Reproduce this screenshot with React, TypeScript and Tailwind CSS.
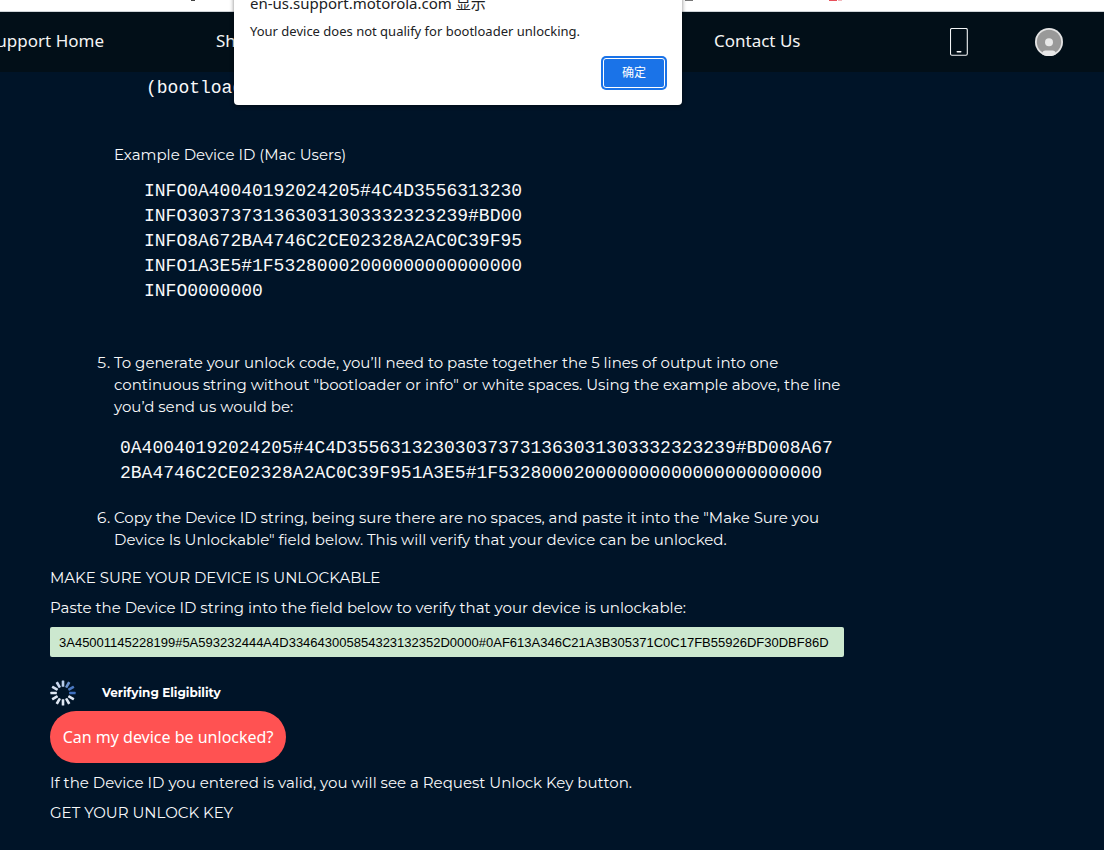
import React from 'react';

const INFO_LINES = [
  'INFO0A40040192024205#4C4D3556313230',
  'INFO30373731363031303332323239#BD00',
  'INFO8A672BA4746C2CE02328A2AC0C39F95',
  'INFO1A3E5#1F53280002000000000000000',
  'INFO0000000',
];

const DEVICE_ID =
  '3A45001145228199#5A593232444A4D334643005854323132352D0000#0AF613A346C21A3B305371C0C17FB55926DF30DBF86D';

const SPOKES = [
  '#b9cdea', '#6c93cf', '#4a78c0', '#3f6fbe', '#dfe7f3', '#dfe7f3',
  '#dfe7f3', '#dfe7f3', '#dfe7f3', '#dfe7f3', '#d3deef', '#c8d6ee',
];

function Spinner() {
  return (
    <svg className="h-[26px] w-[26px] shrink-0" viewBox="0 0 26 26" aria-hidden="true">
      {SPOKES.map((color, i) => (
        <rect key={i} x="11.7" y="0.4" width="2.6" height="6.4" rx="0.5" fill={color} transform={`rotate(${i * 30} 13 13)`} />
      ))}
    </svg>
  );
}

function PhoneIcon() {
  return (
    <svg className="h-7 w-[18px]" viewBox="0 0 18 28" fill="none" aria-hidden="true">
      <rect x="0.5" y="0.5" width="16.8" height="26.7" rx="1.4" stroke="#f3f5f6" strokeWidth="1.1" />
      <rect x="6.5" y="22.9" width="5" height="1.6" rx="0.8" fill="#ffffff" />
    </svg>
  );
}

function AvatarIcon() {
  return (
    <svg className="h-7 w-7" viewBox="0 0 28 28" aria-hidden="true">
      <circle cx="14" cy="14" r="14" fill="#e4e4e4" />
      <circle cx="14" cy="14" r="12.2" fill="#999999" />
      <circle cx="14" cy="14.3" r="4" fill="#e8e8e8" />
      <path d="M7 26.2C7.4 23.6 8.6 22.5 10.6 22.5H17.4C19.4 22.5 20.6 23.6 21 26.2A14 14 0 0 1 7 26.2Z" fill="#e8e8e8" />
    </svg>
  );
}

function BootDialog() {
  return (
    <div
      role="dialog"
      aria-labelledby="dialog-title"
      className="absolute -top-[17px] left-[234px] z-10 flex w-[448px] flex-col rounded-b bg-white px-4 pt-2 pb-[17px] font-['Noto_Sans','Noto_Sans_CJK_SC',sans-serif] text-[#202124] shadow-[0_1px_4px_rgba(0,0,0,0.5)]"
    >
      <h2 id="dialog-title" className="text-[15px] leading-6 whitespace-nowrap">
        en-us.support.motorola.com 显示
      </h2>
      <p className="mt-1 text-[13px] leading-6 whitespace-nowrap">Your device does not qualify for bootloader unlocking.</p>
      <button
        type="button"
        className="mt-[15px] mr-px h-[30px] w-[62px] self-end rounded-[3px] border border-white bg-[#1a73e8] text-[12px] text-white ring-2 ring-[#1a73e8]"
      >
        确定
      </button>
    </div>
  );
}

function Mono({ children }: { children: React.ReactNode }) {
  return <div className="font-['Liberation_Mono',monospace] text-[18px] leading-[25px] whitespace-nowrap">{children}</div>;
}

export default function App() {
  return (
    <div className="relative min-h-screen overflow-hidden bg-[#001428] font-['Montserrat','Inter',sans-serif] text-[15px] leading-[22px] text-[#f8f9fa]">
      <div className="flex h-3 items-start border-b border-[#cfd4d8] bg-white pl-[191px]">
        <span className="h-px w-1 bg-[#444444]" />
        <span className="ml-[490px] h-px w-2 bg-[#777777]" />
        <span className="ml-[136px] h-px w-2 bg-[#e8505b]" />
        <span className="ml-px h-px w-1 bg-[#f2b8bd]" />
      </div>

      <header className="flex h-[60px] items-center bg-[#020f18] font-['Noto_Sans',sans-serif] text-[17px] text-[#f4f4f4]">
        <nav className="flex pb-0.5 whitespace-nowrap">
          <a href="#home" className="flex w-[216px] justify-start">
            <span className="flex w-[104px] justify-end">Support Home</span>
          </a>
          <a href="#shop" className="w-[498px]">Shop</a>
          <a href="#contact">Contact Us</a>
        </nav>
        <div className="ml-auto flex items-center gap-[67px] pr-[41px]">
          <button type="button" aria-label="My device"><PhoneIcon /></button>
          <button type="button" aria-label="Account"><AvatarIcon /></button>
        </div>
      </header>

      <BootDialog />

      <main className="max-w-[844px] pt-1 pb-6 pl-[50px]">
        <div className="pl-24"><Mono>(bootloader)</Mono></div>
        <p className="mt-[43px] pl-16">Example Device ID (Mac Users)</p>
        <div className="mt-[13px] pl-[94px]">
          {INFO_LINES.map((line) => <Mono key={line}>{line}</Mono>)}
        </div>

        <ol start={5} className="mt-12 list-decimal pl-16 whitespace-nowrap">
          <li>
            To generate your unlock code, you’ll need to paste together the 5 lines of output into one<br />
            continuous string without "bootloader or info" or white spaces. Using the example above, the line<br />
            you’d send us would be:
            <div className="mt-[18px] pl-[6px]">
              <Mono>0A40040192024205#4C4D355631323030373731363031303332323239#BD008A67</Mono>
              <Mono>2BA4746C2CE02328A2AC0C39F951A3E5#1F532800020000000000000000000000</Mono>
            </div>
          </li>
          <li className="mt-[21px]">
            Copy the Device ID string, being sure there are no spaces, and paste it into the "Make Sure you<br />
            Device Is Unlockable" field below. This will verify that your device can be unlocked.
          </li>
        </ol>

        <h2 className="mt-4">MAKE SURE YOUR DEVICE IS UNLOCKABLE</h2>
        <label htmlFor="device-id" className="mt-2 block">
          Paste the Device ID string into the field below to verify that your device is unlockable:
        </label>
        <input
          id="device-id"
          type="text"
          defaultValue={DEVICE_ID}
          className="mt-2 block h-[30px] w-full rounded-[2px] bg-[#cce8cf] pl-[9px] font-['Liberation_Sans',sans-serif] text-[13px] text-black outline-none"
        />

        <div className="mt-[23px] flex items-center gap-[26px]">
          <Spinner />
          <span className="text-[12px] font-bold text-white">Verifying Eligibility</span>
        </div>
        <button
          type="button"
          className="mt-[5px] block h-[52px] w-[236px] rounded-full bg-[#ff5252] font-['Noto_Sans',sans-serif] text-[16px] whitespace-nowrap text-white"
        >
          Can my device be unlocked?
        </button>

        <p className="mt-[9px]">If the Device ID you entered is valid, you will see a Request Unlock Key button.</p>
        <h2 className="mt-2">GET YOUR UNLOCK KEY</h2>
      </main>
    </div>
  );
}
